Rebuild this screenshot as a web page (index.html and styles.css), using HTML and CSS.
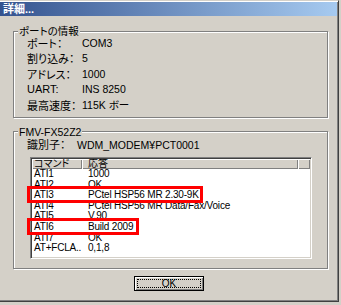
FILE: index.html
```html
<!DOCTYPE html>
<html lang="ja">
<head>
    <meta charset="UTF-8">
    <title>詳細...</title>
    <link rel="stylesheet" href="styles.css">
</head>
<body>
    <div class="window">
        <div class="titlebar">詳細...</div>

        <!-- ポートの情報 -->
        <fieldset class="group group-port">
            <legend>ポートの情報</legend>
            <div class="props">
                <div class="prop-label">ポート：</div><div class="prop-value">COM3</div>
                <div class="prop-label">割り込み：</div><div class="prop-value">5</div>
                <div class="prop-label">アドレス：</div><div class="prop-value">1000</div>
                <div class="prop-label">UART:</div><div class="prop-value">INS 8250</div>
                <div class="prop-label">最高速度：</div><div class="prop-value">115K ボー</div>
            </div>
        </fieldset>

        <!-- モデム -->
        <fieldset class="group group-modem">
            <legend>FMV-FX52Z2</legend>
            <div class="ident">
                <div class="prop-label">識別子：</div><div class="prop-value">WDM_MODEM¥PCT0001</div>
            </div>
            <div class="list">
                <div class="list-head">
                    <div class="col-cmd">コマンド</div>
                    <div class="col-resp">応答</div>
                    <div class="col-rest"></div>
                </div>
                <div class="list-body">
                    <div class="row"><div class="col-cmd">ATI1</div><div class="col-resp">1000</div></div>
                    <div class="row"><div class="col-cmd">ATI2</div><div class="col-resp">OK</div></div>
                    <div class="row"><div class="col-cmd">ATI3</div><div class="col-resp">PCtel HSP56 MR 2.30-9K</div></div>
                    <div class="row"><div class="col-cmd">ATI4</div><div class="col-resp">PCtel HSP56 MR Data/Fax/Voice</div></div>
                    <div class="row"><div class="col-cmd">ATI5</div><div class="col-resp">V.90</div></div>
                    <div class="row"><div class="col-cmd">ATI6</div><div class="col-resp">Build 2009</div></div>
                    <div class="row"><div class="col-cmd">ATI7</div><div class="col-resp">OK</div></div>
                    <div class="row"><div class="col-cmd">AT+FCLA..</div><div class="col-resp">0,1,8</div></div>
                </div>
                <!-- 赤枠 -->
                <div class="mark mark-ati3"></div>
                <div class="mark mark-ati6"></div>
            </div>
        </fieldset>

        <div class="buttons">
            <button class="btn-ok"><span>OK</span></button>
        </div>
    </div>
</body>
</html>
```

FILE: styles.css
```css
body {
    margin: 0;
    padding: 0;
    background-color: #d4d0c8;
    font-family: "Liberation Sans", "Noto Sans CJK JP", sans-serif;
    font-feature-settings: "palt";
    font-size: 11px;
    color: #000;
}
.window {
    width: 339px;
    height: 302px;
    box-sizing: border-box;
    background-color: #d4d0c8;
    border-top: 1px solid #d4d0c8;
    border-right: 1px solid #404040;
    border-bottom: 1px solid #404040;
    box-shadow: inset 0 1px 0 #fff, inset -1px -1px 0 #808080;
    padding-top: 1px;
    display: flex;
    flex-direction: column;
}
.titlebar {
    height: 14px;
    margin-right: 1px;
    padding-left: 3px;
    background: linear-gradient(to right, #34538f, #a6caf0);
    color: white;
    font-weight: bold;
    font-size: 11px;
    line-height: 14px;
}
.group {
    margin: 0 0 0 13px;
    width: 315px;
    box-sizing: border-box;
    padding: 0 0 0 13px;
    border: 1px solid #808080;
    box-shadow: 1px 1px 0 #fff, inset 1px 1px 0 #fff;
}
.group legend {
    margin-left: -9px;
    padding: 0 1px;
    line-height: 10px;
    font-size: 10.5px;
    background-color: #d4d0c8;
}
.group-port {
    margin-top: 10px;
    padding-bottom: 4px;
}
.group-modem {
    margin-top: 9px;
    padding-bottom: 9px;
}
.props {
    display: grid;
    grid-template-columns: 55px auto;
    grid-auto-rows: 15.5px;
    align-items: center;
    margin-top: -1px;
}
.prop-label {
    white-space: nowrap;
}
.prop-value {
    font-family: "Liberation Sans Narrow", "Liberation Sans", "Noto Sans CJK JP", sans-serif;
    font-size: 10.5px;
}
.ident {
    display: grid;
    grid-template-columns: 50px auto;
    line-height: 12px;
    margin-top: 2px;
}
.list {
    position: relative;
    width: 282px;
    height: 102px;
    box-sizing: border-box;
    margin: 6px 0 0 3px;
    border: 1px solid;
    border-color: #808080 #fff #fff #808080;
    box-shadow: inset 1px 1px 0 #404040, inset -1px -1px 0 #d4d0c8;
    padding: 1px;
    background-color: #fff;
    font-size: 10px;
}
.list-head {
    display: flex;
    height: 10px;
    line-height: 10px;
    background-color: #d4d0c8;
}
.list-head > div {
    box-shadow: inset 1px 1px 0 #fff, inset -1px -1px 0 #808080;
    font-size: 10px;
    overflow: hidden;
}
.col-cmd {
    width: 50px;
    box-sizing: border-box;
    padding-left: 2px;
}
.col-resp {
    width: 216px;
    box-sizing: border-box;
    padding-left: 6px;
    white-space: nowrap;
}
.col-rest {
    flex: 1;
}
.list-body {
    padding-top: 0.5px;
}
.row {
    display: flex;
    height: 10.6px;
    line-height: 10.6px;
    letter-spacing: -0.2px;
}
.mark {
    position: absolute;
    left: -4px;
    height: 17px;
    box-sizing: border-box;
    border: 3px solid #f00;
}
.mark-ati3 {
    top: 28px;
    width: 176px;
}
.mark-ati6 {
    top: 60px;
    width: 112px;
}
.buttons {
    display: flex;
    justify-content: center;
    margin-top: 7px;
}
.btn-ok {
    display: flex;
    width: 70px;
    height: 15px;
    padding: 2px;
    box-sizing: border-box;
    border: 1px solid #000;
    background-color: #d4d0c8;
    box-shadow: inset 1px 1px 0 #fff, inset -1px -1px 0 #808080;
    font-family: "Liberation Sans", sans-serif;
    font-size: 10px;
}
.btn-ok span {
    flex: 1;
    border: 1px dotted #000;
    line-height: 7px;
    text-align: center;
}
```
